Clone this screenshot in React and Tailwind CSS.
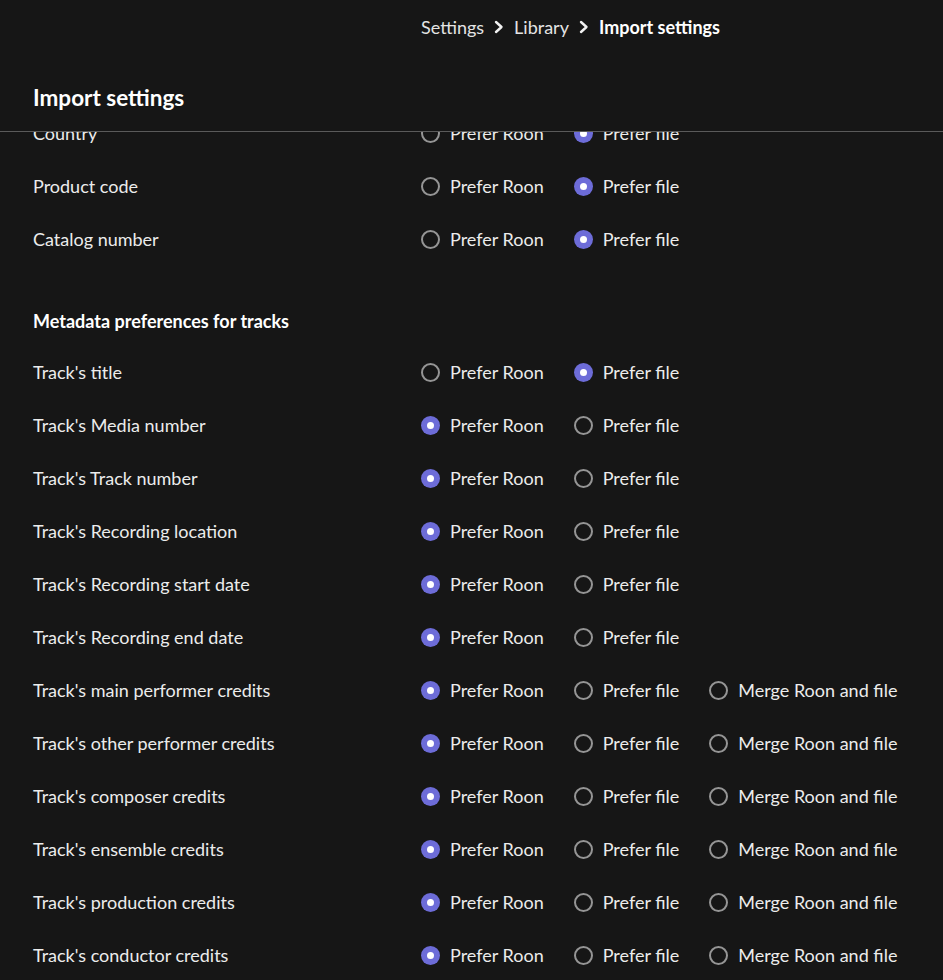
import React from "react";

const albumRows = [
  { label: "Country", sel: 1, opts: 2 },
  { label: "Product code", sel: 1, opts: 2 },
  { label: "Catalog number", sel: 1, opts: 2 },
];

const trackRows = [
  { label: "Track's title", sel: 1, opts: 2 },
  { label: "Track's Media number", sel: 0, opts: 2 },
  { label: "Track's Track number", sel: 0, opts: 2 },
  { label: "Track's Recording location", sel: 0, opts: 2 },
  { label: "Track's Recording start date", sel: 0, opts: 2 },
  { label: "Track's Recording end date", sel: 0, opts: 2 },
  { label: "Track's main performer credits", sel: 0, opts: 3 },
  { label: "Track's other performer credits", sel: 0, opts: 3 },
  { label: "Track's composer credits", sel: 0, opts: 3 },
  { label: "Track's ensemble credits", sel: 0, opts: 3 },
  { label: "Track's production credits", sel: 0, opts: 3 },
  { label: "Track's conductor credits", sel: 0, opts: 3 },
];

const optionLabels = ["Prefer Roon", "Prefer file", "Merge Roon and file"];

function Radio({ checked }) {
  if (checked) {
    return (
      <span className="flex h-[19px] w-[19px] shrink-0 items-center justify-center rounded-full bg-[#6d6cd8]">
        <span className="h-[7px] w-[7px] rounded-full bg-white" />
      </span>
    );
  }
  return (
    <span className="h-[19px] w-[19px] shrink-0 rounded-full border-2 border-[#959595]" />
  );
}

function Row({ label, sel, opts }) {
  return (
    <div className="flex h-[53px] items-center">
      <div className="w-[388px] shrink-0 text-[#ececec]">{label}</div>
      <div className="flex items-center gap-[30px]">
        {optionLabels.slice(0, opts).map((o, i) => (
          <div key={o} className="flex items-center gap-[10px]">
            <Radio checked={i === sel} />
            <span className="text-[#ececec]">{o}</span>
          </div>
        ))}
      </div>
    </div>
  );
}

function Chevron() {
  return (
    <svg width="12" height="14" viewBox="0 0 12 14" className="mx-[9px]">
      <path d="M3 2 L8.5 7 L3 12" fill="none" stroke="#f2f2f2" strokeWidth="2.4" strokeLinecap="round" strokeLinejoin="round" />
    </svg>
  );
}

export default function App() {
  return (
    <div
      className="flex h-[980px] w-full flex-col overflow-hidden bg-[#161616] text-[18px] text-[#ececec]"
      style={{ fontFamily: "Lato, 'Open Sans', sans-serif" }}
    >
      <div className="shrink-0 border-b border-[#5a5a5a] bg-[#161616]">
        <div className="flex h-[54px] items-center pl-[421px] text-[18px]">
          <span className="text-[#e4e4e4]">Settings</span>
          <Chevron />
          <span className="text-[#e4e4e4]">Library</span>
          <Chevron />
          <span className="font-bold text-white">Import settings</span>
        </div>
        <div className="flex h-[77px] items-center px-[33px] pt-[11px]">
          <h1 className="text-[22.5px] font-bold text-white">Import settings</h1>
        </div>
      </div>
      <div className="min-h-0 flex-1 overflow-hidden">
        <div className="-mt-[25px] px-[33px]">
          {albumRows.map((r) => (
            <Row key={r.label} {...r} />
          ))}
          <div className="pb-[13px] pt-[44px] text-[18px] font-bold leading-[23px] text-white">
            Metadata preferences for tracks
          </div>
          {trackRows.map((r) => (
            <Row key={r.label} {...r} />
          ))}
        </div>
      </div>
    </div>
  );
}
